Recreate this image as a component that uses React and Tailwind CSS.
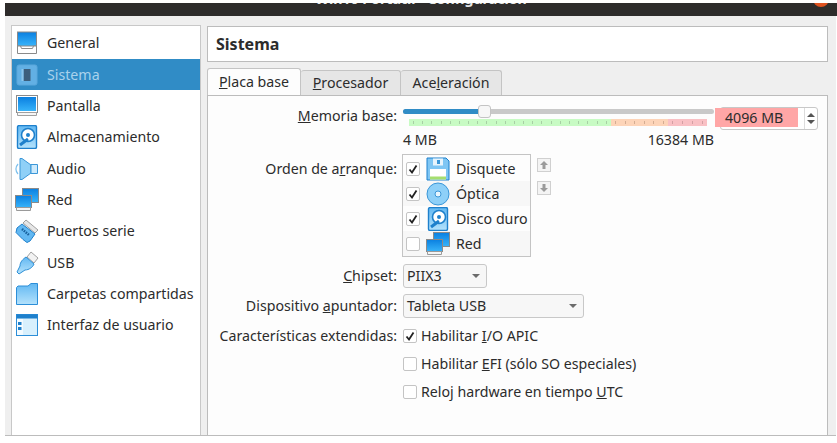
const font = { fontFamily: '"Noto Sans", sans-serif' };

// shared gradients for the drawn icons
function IconDefs() {
  return (
    <svg className="absolute w-0 h-0">
      <defs>
        <linearGradient id="screen" x1="0" y1="0" x2="0" y2="1">
          <stop offset="0" stopColor="#0a7fe0" />
          <stop offset="1" stopColor="#38b4fa" />
        </linearGradient>
        <linearGradient id="sky" x1="0" y1="0" x2="0" y2="1">
          <stop offset="0" stopColor="#62b8f2" />
          <stop offset="1" stopColor="#b4e2fc" />
        </linearGradient>
      </defs>
    </svg>
  );
}

function MonitorIcon() {
  return (
    <svg width="24" height="24" viewBox="0 0 24 24">
      <rect x="1.5" y="1.5" width="21" height="17" fill="#fff" stroke="#8a8a8a" />
      <rect x="3" y="3" width="18" height="14" fill="url(#screen)" />
      <path d="M2.5 18.5h19v3h-19z" fill="#f6f6f6" stroke="#a0a0a0" />
    </svg>
  );
}

function GeneralIcon() {
  return (
    <svg width="24" height="24" viewBox="0 0 24 24">
      <rect x="2.5" y="1" width="19" height="14" fill="url(#screen)" stroke="#8a8a8a" />
      <path d="M2.5 15v7.5h19V15h-3l-1 2.5h-11l-1-2.5z" fill="#fff" stroke="#8a8a8a" />
    </svg>
  );
}

function ChipIcon() {
  return (
    <svg width="24" height="24" viewBox="0 0 24 24">
      <rect x="2" y="2" width="20" height="20" rx="2" fill="#62b0e4" stroke="#5aa8dc" />
      <rect x="8.5" y="6" width="7" height="12" fill="#3c5f7d" />
      <rect x="6.5" y="6" width="2" height="12" fill="#8cc6ec" />
    </svg>
  );
}

function DiskIcon() {
  return (
    <svg width="24" height="24" viewBox="0 0 24 24">
      <rect x="2.5" y="0.5" width="19" height="23" rx="1.5" fill="url(#sky)" stroke="#1e80cc" strokeWidth="1.4" />
      <circle cx="13" cy="10" r="6.5" fill="#fff" stroke="#1e80cc" strokeWidth="1.6" />
      <circle cx="13" cy="10" r="2" fill="#1e80cc" />
      <path d="M5 20l8-6" stroke="#1e80cc" strokeWidth="3" />
    </svg>
  );
}

function SpeakerIcon() {
  return (
    <svg width="24" height="24" viewBox="0 0 24 24">
      <path d="M3 7c-2.500 3-2.500 7 0 10" fill="none" stroke="#7cc0ee" strokeWidth="1.2" />
      <path d="M16 8L7 1.500H5v21h2l9-6.500z" fill="#8fd0f7" stroke="#3b97d8" />
      <path d="M16 7.500h6.500v9H16z" fill="#cdeafc" stroke="#3b97d8" />
    </svg>
  );
}

function NetworkIcon() {
  return (
    <svg width="24" height="24" viewBox="0 0 24 24">
      <rect x="7.500" y="0.500" width="16" height="14" fill="url(#screen)" stroke="#8a8a8a" />
      <rect x="0.500" y="7.500" width="16" height="12" fill="url(#screen)" stroke="#8a8a8a" />
      <path d="M1.500 19.500h14v3h-14z" fill="#f4f4f4" stroke="#9a9a9a" />
    </svg>
  );
}

function SerialIcon() {
  return (
    <svg width="24" height="24" viewBox="0 0 24 24">
      <path d="M11 1l12 10-3 3L8 4z" fill="#e6e6e6" stroke="#a0a0a0" />
      <path d="M7 5l13 10-5 7-3 1.500-4-3-7-7 1-4.500z" fill="#62b8f2" stroke="#1e80cc" />
      <path d="M7 10l7 6" stroke="#17609c" strokeWidth="2.500" strokeDasharray="1.500 1" />
    </svg>
  );
}

function UsbIcon() {
  return (
    <svg width="24" height="24" viewBox="0 0 24 24">
      <path d="M16 1l7 6-4 5-7-6z" fill="#f2f2f2" stroke="#a0a0a0" />
      <path d="M11 6l8 7c-1 3-5 6-9 6l-6 4-2-2 3-6c0-4 3-7 6-9z" fill="url(#sky)" stroke="#2d8fd6" />
    </svg>
  );
}

function FolderIcon() {
  return (
    <svg width="24" height="24" viewBox="0 0 24 24">
      <path d="M1.500 5.500L3 4h10l3-2.500h6.500v21h-21z" fill="url(#sky)" stroke="#2c8ed8" />
    </svg>
  );
}

function WindowIcon() {
  return (
    <svg width="24" height="24" viewBox="0 0 24 24">
      <rect x="1.500" y="1.500" width="21" height="21" fill="#d8f0fd" stroke="#2c8ed8" />
      <rect x="1.500" y="1.500" width="21" height="4" fill="#1e80cc" />
      <rect x="2" y="6" width="6" height="16" fill="#f4fbff" />
      <rect x="3" y="9" width="3.500" height="3" fill="#1e80cc" />
      <rect x="3" y="14" width="3.500" height="3" fill="#1e80cc" />
    </svg>
  );
}

function FloppyIcon() {
  return (
    <svg width="24" height="24" viewBox="0 0 24 24">
      <path d="M1 1h19l3 3v19H1z" fill="#7fc6f4" stroke="#1e80cc" />
      <rect x="7" y="1.500" width="10" height="7" fill="#e8f4fc" />
      <rect x="11" y="3" width="3" height="4" fill="#3b97d8" />
      <rect x="4" y="12" width="16" height="10.500" fill="#fff" />
      <rect x="4" y="19.500" width="16" height="3" fill="#a5de6f" />
    </svg>
  );
}

function DiscIcon() {
  return (
    <svg width="24" height="24" viewBox="0 0 24 24">
      <circle cx="12" cy="12" r="11" fill="#8ed0f8" stroke="#3b97d8" />
      <circle cx="12" cy="12" r="3" fill="#e8f6fe" stroke="#3b97d8" />
    </svg>
  );
}

const sections = [
  { label: 'General', icon: <GeneralIcon /> },
  { label: 'Sistema', icon: <ChipIcon />, active: true },
  { label: 'Pantalla', icon: <MonitorIcon /> },
  { label: 'Almacenamiento', icon: <DiskIcon /> },
  { label: 'Audio', icon: <SpeakerIcon /> },
  { label: 'Red', icon: <NetworkIcon /> },
  { label: 'Puertos serie', icon: <SerialIcon /> },
  { label: 'USB', icon: <UsbIcon /> },
  { label: 'Carpetas compartidas', icon: <FolderIcon /> },
  { label: 'Interfaz de usuario', icon: <WindowIcon /> },
];

const bootOrder = [
  { label: 'Disquete', icon: <FloppyIcon />, checked: true },
  { label: 'Óptica', icon: <DiscIcon />, checked: true, alt: true },
  { label: 'Disco duro', icon: <DiskIcon />, checked: true },
  { label: 'Red', icon: <NetworkIcon />, checked: false, alt: true },
];

function Check({ checked }) {
  return (
    <span className="w-[14px] h-[14px] shrink-0 flex items-center justify-center bg-white border border-[#c4c4c4] rounded-[2px]">
      {checked && (
        <svg width="10" height="10" viewBox="0 0 10 10">
          <path d="M1.500 5.500L4 8.500 8.500 1.500" fill="none" stroke="#222" strokeWidth="1.800" />
        </svg>
      )}
    </span>
  );
}

function Select({ value, width }) {
  return (
    <div className={`${width} h-[24px] flex items-center justify-between pl-[3px] pr-[6px] border border-[#c8c8c8] rounded-[3px] bg-[#f7f7f7]`}>
      <span>{value}</span>
      <svg width="8" height="4" viewBox="0 0 8 4"><path d="M0 0h8L4 4z" fill="#6b6b6b" /></svg>
    </div>
  );
}

function Ticks({ width, bg, tick, count }) {
  return (
    <div className={`${width} ${bg} h-[7px] flex items-center justify-around`}>
      {Array.from({ length: count }).map((_, i) => (
        <span key={i} className={`w-[1px] h-[3px] ${tick}`} />
      ))}
    </div>
  );
}

export default function App() {
  return (
    <div style={font} className="w-[837px] h-[443px] bg-white overflow-hidden text-[14.2px] leading-[20px] text-[#2c2c2c] relative">
      <IconDefs />
      <div className="h-[3px]" />
      <div className="ml-[5px] h-[13px] bg-[#2e2c2b] overflow-hidden flex justify-center relative">
        <span className="text-[#e6e6e6] font-bold -mt-[14px]">Win10 Portátil - Configuración</span>
        <span className="absolute right-[8px] -top-[12px] w-[16px] h-[16px] rounded-full bg-[#e0521f]" />
      </div>
      <div className="ml-[5px] mr-[1px] h-[420px] bg-[#efefef] border-b border-[#bcbcbc] flex gap-[6px] pl-[6px] pt-[9px]">
        <div className="w-[190px] h-[410px] bg-white border border-b-0 border-[#c8c8c8] shrink-0 flex flex-col pt-[1.5px]">
          {sections.map((s) => (
            <div key={s.label} className={`h-[31.35px] flex items-center gap-[8px] pl-[3px] shrink-0 ${s.active ? 'bg-[#308cc6] text-[#a9d2ec]' : ''}`}>
              {s.icon}
              <span>{s.label}</span>
            </div>
          ))}
        </div>
        <div className="w-[621px] flex flex-col">
          <div className="h-[36px] mt-[1px] bg-white border border-[#bcbcbc] flex items-center pl-[8px] font-bold text-[16px]">Sistema</div>
          <div className="flex mt-[7px] h-[26px] items-end relative z-10">
            <div className="h-[27px] w-[94px] bg-[#fdfdfd] border border-b-0 border-[#c4c4c4] rounded-t-[3px] flex items-center justify-center"><span><u>P</u>laca base</span></div>
            <div className="h-[25px] w-[100px] bg-[#e6e6e6] border border-b-0 border-l-0 border-[#c4c4c4] rounded-t-[3px] flex items-center justify-center"><span><u>P</u>rocesador</span></div>
            <div className="h-[25px] w-[101px] bg-[#e6e6e6] border border-b-0 border-l-0 border-[#c4c4c4] rounded-t-[3px] flex items-center justify-center"><span>Ace<u>l</u>eración</span></div>
          </div>
          <div className="flex-1 bg-[#fdfdfd] border border-b-0 border-[#bcbcbc] pt-[10px]">
            <div className="flex">
              <div className="w-[195px] text-right pr-[6px]"><u>M</u>emoria base:</div>
              <div className="w-[311px]">
                <div className="h-[5px] mt-[3px] rounded-full bg-[#c9c9c9] relative">
                  <div className="h-[5px] w-[78px] rounded-full bg-[#308cc6]" />
                  <span className="absolute left-[75px] -top-[4px] w-[13px] h-[13px] rounded-[3px] bg-[#f7f7f7] border border-[#c4c4c4]" />
                </div>
                <div className="mt-[5px] ml-[6px] flex">
                  <Ticks width="w-[202px]" bg="bg-[#c8fbc4]" tick="bg-[#a8cfa5]" count={22} />
                  <Ticks width="w-[57px]" bg="bg-[#fdd4b8]" tick="bg-[#d4ad93]" count={6} />
                  <Ticks width="w-[39px]" bg="bg-[#f9c0c4]" tick="bg-[#d4a0a4]" count={4} />
                </div>
                <div className="flex justify-between mt-[4px]"><span>4 MB</span><span>16384 MB</span></div>
              </div>
              <div className="ml-[6px] mt-[1px] h-[23px] w-[98px] flex border border-[#c8c8c8] rounded-[3px] bg-white relative">
                <span className="absolute -left-[6px] top-0 w-[83px] h-[19px] bg-[#ffa6a6]" />
                <span className="relative pl-[4px] w-[83px]">4096 MB</span>
                <div className="flex-1 border-l border-[#dcdcdc] flex flex-col items-center justify-center gap-[3px]">
                  <svg width="8" height="4" viewBox="0 0 8 4"><path d="M0 4h8L4 0z" fill="#555" /></svg>
                  <svg width="8" height="4" viewBox="0 0 8 4"><path d="M0 0h8L4 4z" fill="#555" /></svg>
                </div>
              </div>
            </div>
            <div className="flex mt-[4px]">
              <div className="w-[194px] text-right pr-[5px] pt-[5px]">Orden de a<u>r</u>ranque:</div>
              <div className="w-[129px] h-[103px] border border-[#c4c4c4] flex flex-col pt-[1px]">
                {bootOrder.map((b) => (
                  <div key={b.label} className={`h-[25px] flex items-center pl-[3px] gap-[6px] whitespace-nowrap ${b.alt ? 'bg-[#f7f7f7]' : ''}`}>
                    <Check checked={b.checked} />
                    {b.icon}
                    <span>{b.label}</span>
                  </div>
                ))}
              </div>
              <div className="ml-[6px] mt-[4px] flex flex-col gap-[9px]">
                <span className="w-[14px] h-[14px] bg-[#f4f4f4] border border-[#d0d0d0] flex items-center justify-center">
                  <svg width="8" height="8" viewBox="0 0 8 8"><path d="M4 0l4 4H5.500v4h-3V4H0z" fill="#9a9a9a" /></svg>
                </span>
                <span className="w-[14px] h-[14px] bg-[#f4f4f4] border border-[#d0d0d0] flex items-center justify-center">
                  <svg width="8" height="8" viewBox="0 0 8 8"><path d="M4 8l4-4H5.500V0h-3v4H0z" fill="#9a9a9a" /></svg>
                </span>
              </div>
            </div>
            <div className="flex mt-[7px] items-center">
              <div className="w-[195px] text-right pr-[6px]"><u>C</u>hipset:</div>
              <Select value="PIIX3" width="w-[84px]" />
            </div>
            <div className="flex mt-[6px] items-center">
              <div className="w-[195px] text-right pr-[6px]">Dispositivo <u>a</u>puntador:</div>
              <Select value="Tableta USB" width="w-[181px]" />
            </div>
            <div className="flex mt-[4px] items-center h-[28px]">
              <div className="w-[195px] text-right pr-[6px] whitespace-nowrap">Características extendidas:</div>
              <div className="flex items-center gap-[4px]"><Check checked /><span>Habilitar <u>I</u>/O APIC</span></div>
            </div>
            <div className="flex items-center h-[28px] pl-[195px]">
              <div className="flex items-center gap-[4px]"><Check /><span>Habilitar <u>E</u>FI (sólo SO especiales)</span></div>
            </div>
            <div className="flex items-center h-[28px] pl-[195px]">
              <div className="flex items-center gap-[4px]"><Check /><span>Reloj hardware en tiempo <u>U</u>TC</span></div>
            </div>
          </div>
        </div>
      </div>
    </div>
  );
}
